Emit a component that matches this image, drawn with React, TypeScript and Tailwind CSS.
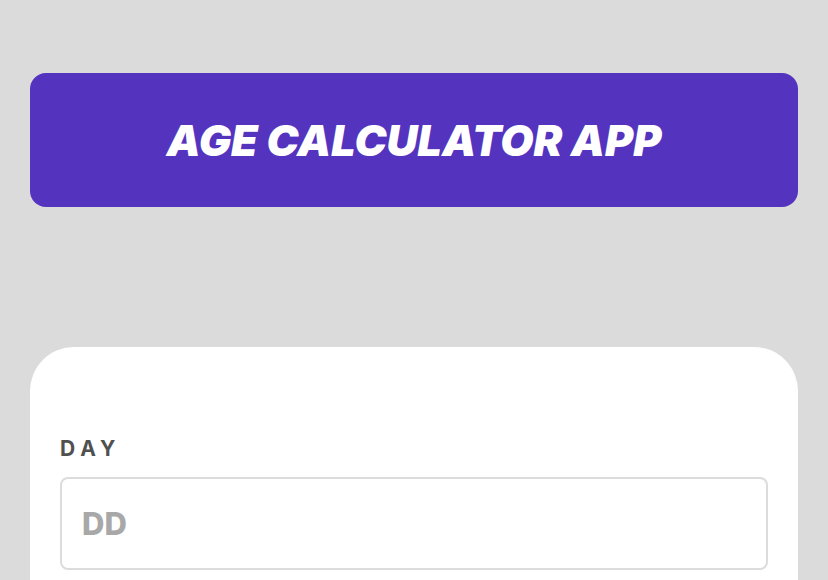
export default function App() {
    return (
        <div
            className="min-h-[580px] bg-[#dbdbdb] px-[30px] pt-[73px]"
            style={{ fontFamily: "Inter, 'Noto Sans', sans-serif" }}
        >
            <header className="flex h-[134px] items-center justify-center rounded-[16px] bg-[#5433bf]">
                <h1 className="text-[43px] font-black italic text-white">
                    AGE CALCULATOR APP
                </h1>
            </header>

            <main className="mt-[140px] rounded-t-[44px] bg-white px-[30px] pt-[90px] pb-10">
                <label className="block">
                    <span className="block text-[21px] leading-[24px] font-bold tracking-[0.28em] text-[#505050]">
                        DAY
                    </span>
                    <input
                        type="text"
                        placeholder="DD"
                        className="mt-[16px] block h-[93px] w-full rounded-[8px] border-2 border-[#dcdcdc] px-[20px] text-[31px] font-extrabold text-[#333] placeholder:text-[#a8a8a8] focus:outline-none"
                    />
                </label>
            </main>
        </div>
    );
}
